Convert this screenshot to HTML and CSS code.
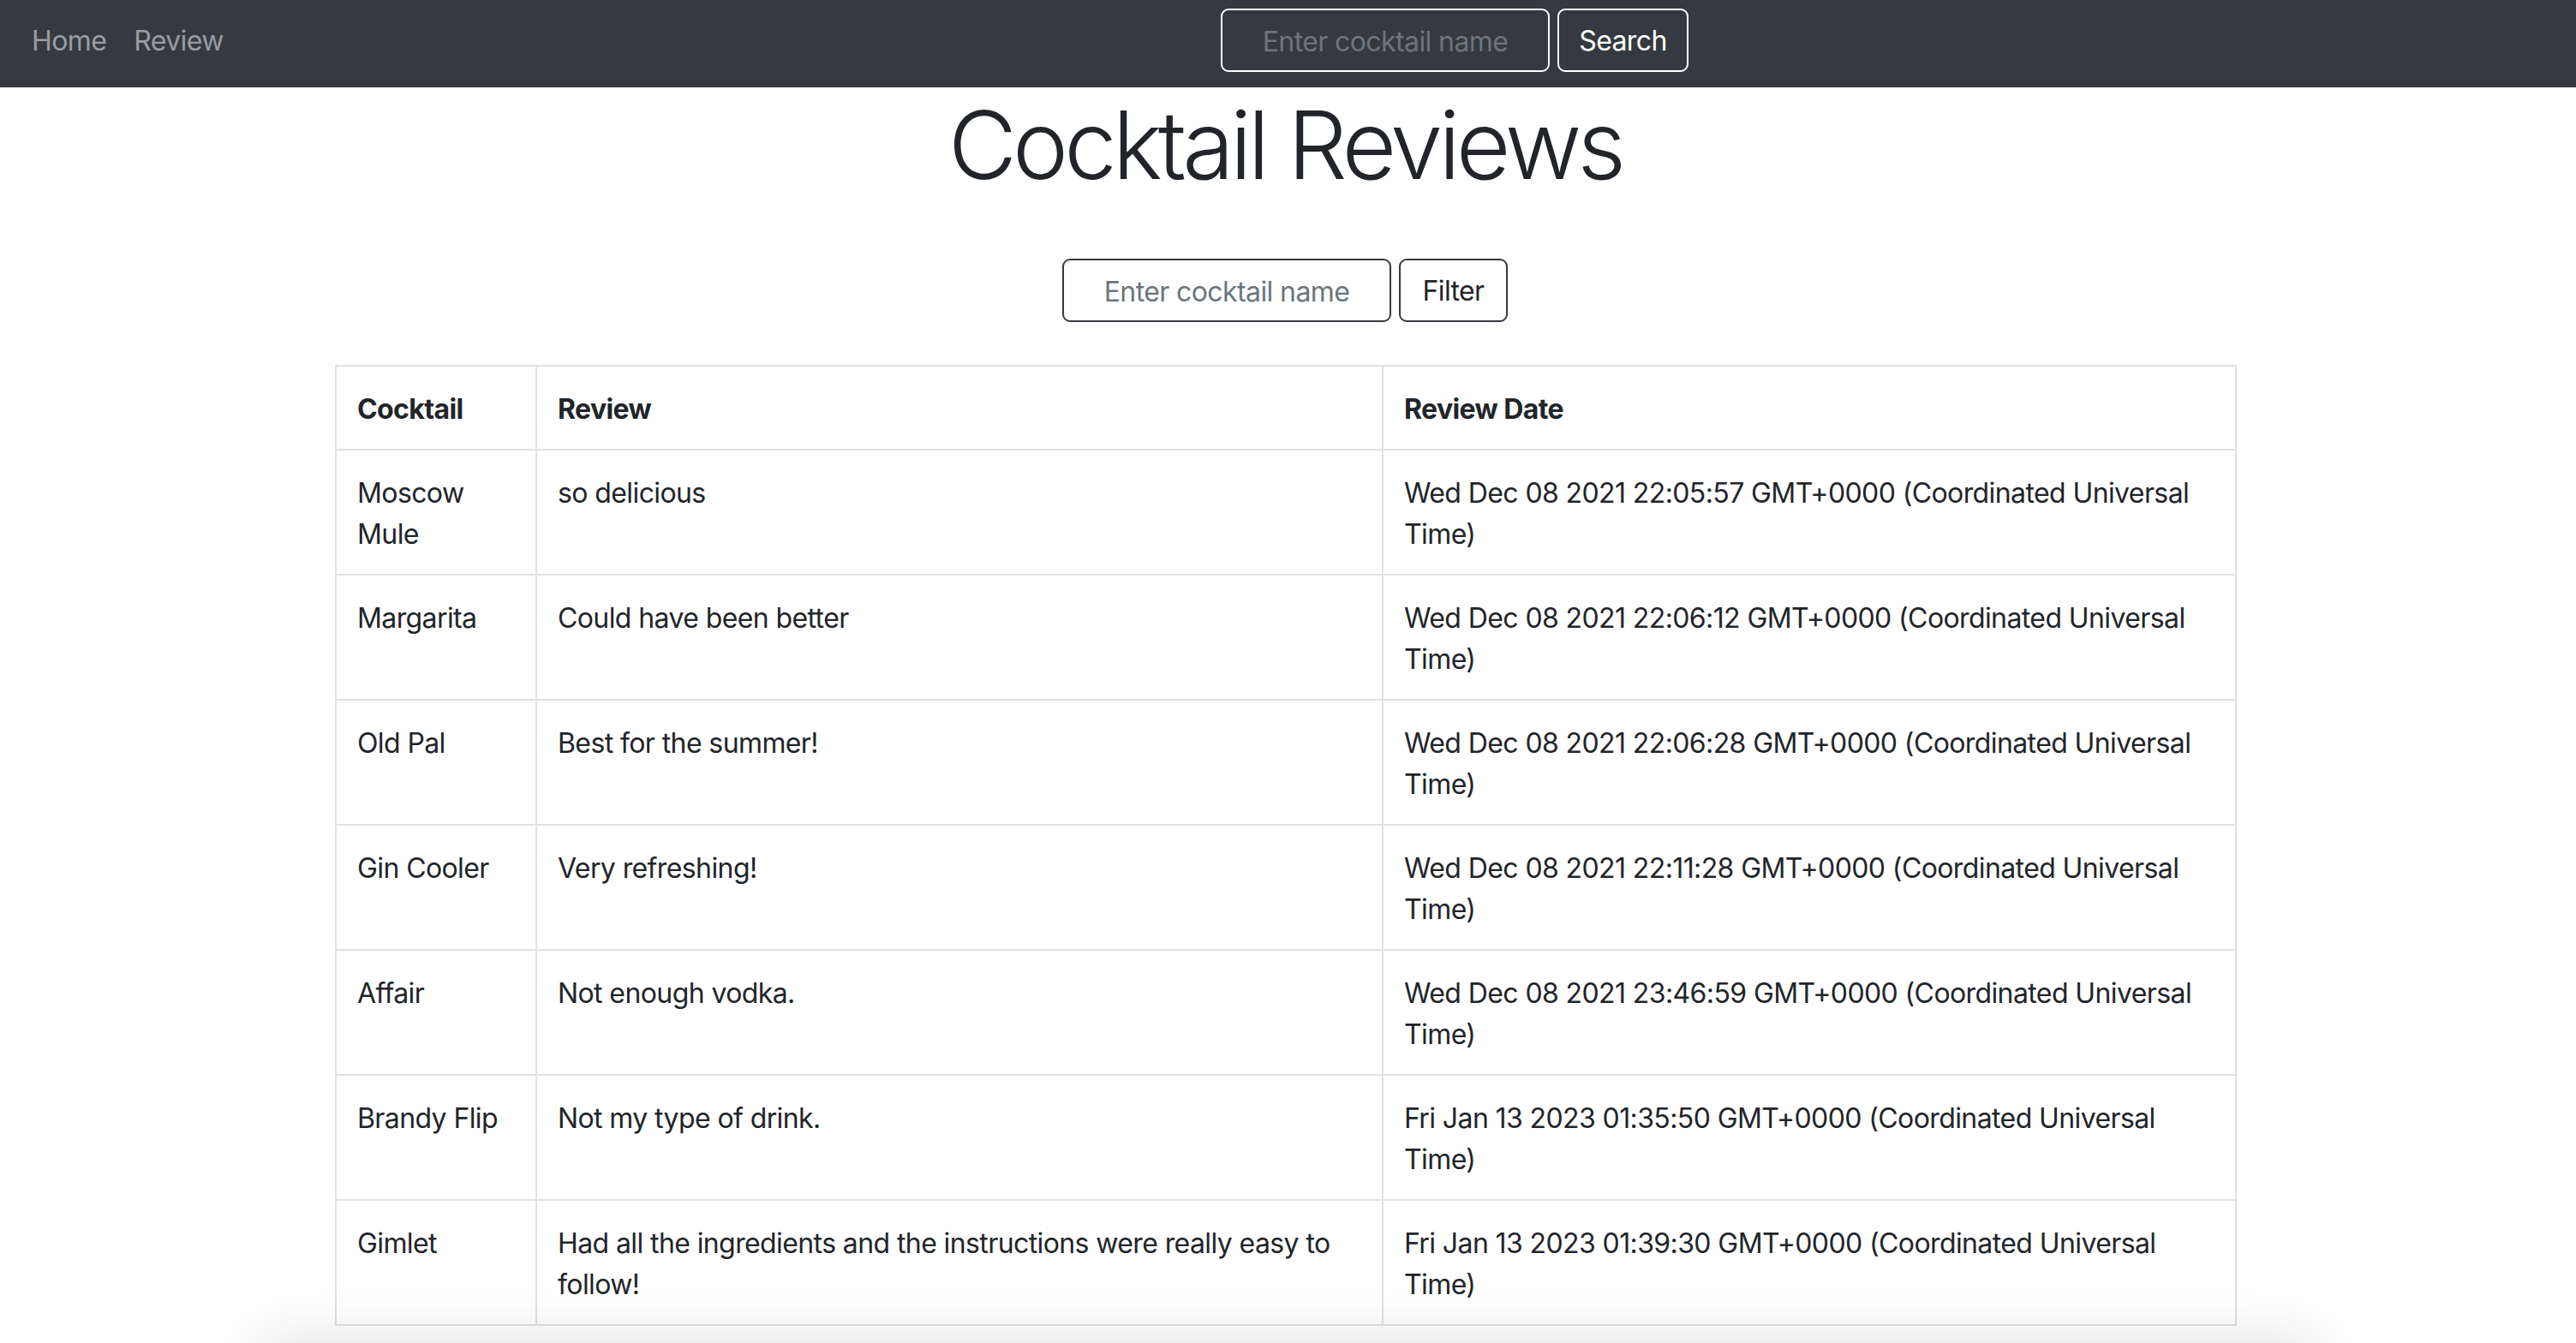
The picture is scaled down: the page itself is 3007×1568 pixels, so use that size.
FILE: index.html
```html
<!DOCTYPE html>
<html lang="en">
<head>
<meta charset="utf-8">
<title>Cocktail Reviews</title>
<link rel="stylesheet" href="styles.css">
</head>
<body>
<nav class="navbar">
  <div class="nav-links">
    <a class="nav-link" href="#">Home</a>
    <a class="nav-link" href="#">Review</a>
  </div>
  <form class="search-form">
    <input class="field field-dark" type="text" placeholder="Enter cocktail name">
    <button class="btn btn-outline-light" type="button">Search</button>
  </form>
</nav>
<main class="page">
  <div class="container">
    <h1 class="title">Cocktail Reviews</h1>
    <form class="search-form filter-form">
      <input class="field field-light" type="text" placeholder="Enter cocktail name">
      <button class="btn btn-outline-dark" type="button">Filter</button>
    </form>
    <table class="reviews">
      <colgroup>
        <col class="col-name">
        <col class="col-review">
        <col class="col-date">
      </colgroup>
      <thead>
        <tr><th>Cocktail</th><th>Review</th><th>Review Date</th></tr>
      </thead>
      <tbody>
        <tr><td>Moscow Mule</td><td>so delicious</td><td>Wed Dec 08 2021 22:05:57 GMT+0000 (Coordinated Universal Time)</td></tr>
        <tr><td>Margarita</td><td>Could have been better</td><td>Wed Dec 08 2021 22:06:12 GMT+0000 (Coordinated Universal Time)</td></tr>
        <tr><td>Old Pal</td><td>Best for the summer!</td><td>Wed Dec 08 2021 22:06:28 GMT+0000 (Coordinated Universal Time)</td></tr>
        <tr><td>Gin Cooler</td><td>Very refreshing!</td><td>Wed Dec 08 2021 22:11:28 GMT+0000 (Coordinated Universal Time)</td></tr>
        <tr><td>Affair</td><td>Not enough vodka.</td><td>Wed Dec 08 2021 23:46:59 GMT+0000 (Coordinated Universal Time)</td></tr>
        <tr><td>Brandy Flip</td><td>Not my type of drink.</td><td>Fri Jan 13 2023 01:35:50 GMT+0000 (Coordinated Universal Time)</td></tr>
        <tr><td>Gimlet</td><td>Had all the ingredients and the instructions were really easy to follow!</td><td>Fri Jan 13 2023 01:39:30 GMT+0000 (Coordinated Universal Time)</td></tr>
      </tbody>
    </table>
  </div>
</main>
<div class="bottom-shadow"></div>
</body>
</html>
```

FILE: styles.css
```css
* { box-sizing: border-box; }

html, body {
  margin: 0;
  padding: 0;
  background: #ffffff;
}

body {
  font-family: Inter, "Liberation Sans", Arial, sans-serif;
  font-size: 32px;
  line-height: 48px;
  letter-spacing: -0.6px;
  color: #212529;
  overflow: hidden;
}

.navbar {
  display: flex;
  align-items: center;
  height: 102px;
  padding: 10px 0 18px 21px;
  background: #343a40;
}

.nav-links {
  display: flex;
  flex: 0 0 1404px;
}

.nav-link {
  padding: 2px 16px 0;
  color: rgba(255, 255, 255, 0.5);
  text-decoration: none;
  font-size: 32px;
  line-height: 48px;
}

.search-form {
  display: flex;
  gap: 9px;
  margin: 0;
}

.field {
  width: 384px;
  height: 74px;
  padding: 2px 20px 0;
  border-radius: 9px;
  border: 2px solid #ffffff;
  font-family: inherit;
  font-size: 32px;
  letter-spacing: -0.6px;
  text-align: center;
  outline: none;
}

.field::placeholder {
  color: #6c757d;
  opacity: 1;
}

.field-dark {
  background: transparent;
  color: #ffffff;
}

.field-light {
  background: #ffffff;
  border-color: #343a40;
  color: #212529;
}

.btn {
  height: 74px;
  padding: 2px 20px 0;
  border-radius: 9px;
  background: transparent;
  font-family: inherit;
  font-size: 32px;
  letter-spacing: -0.6px;
  line-height: 48px;
  cursor: pointer;
}

.btn-outline-light {
  border: 2px solid #ffffff;
  color: #ffffff;
  width: 153px;
}

.btn-outline-dark {
  border: 2px solid #343a40;
  color: #212529;
  width: 127px;
}

.page {
  padding-right: 7px;
}

.container {
  width: 2218px;
  margin: 0 auto;
}

.title {
  margin: 0;
  font-size: 110px;
  font-weight: 300;
  line-height: 134px;
  text-align: center;
  letter-spacing: -5px;
}

.filter-form {
  justify-content: center;
  margin-top: 66px;
}

.reviews {
  width: 2218px;
  margin-top: 50px;
  border-collapse: collapse;
  table-layout: fixed;
}

.col-name { width: 234px; }
.col-review { width: 988px; }
.col-date { width: 996px; }

.reviews th,
.reviews td {
  padding: 26px 24px 22px;
  border: 2px solid #dee2e6;
  text-align: left;
  vertical-align: top;
  font-size: 32px;
  line-height: 48px;
}

.reviews th {
  font-weight: 700;
}

.bottom-shadow {
  position: fixed;
  left: 330px;
  right: 330px;
  top: 1590px;
  height: 200px;
  box-shadow: 0 0 70px 20px rgba(0, 0, 0, 0.14);
}
```
